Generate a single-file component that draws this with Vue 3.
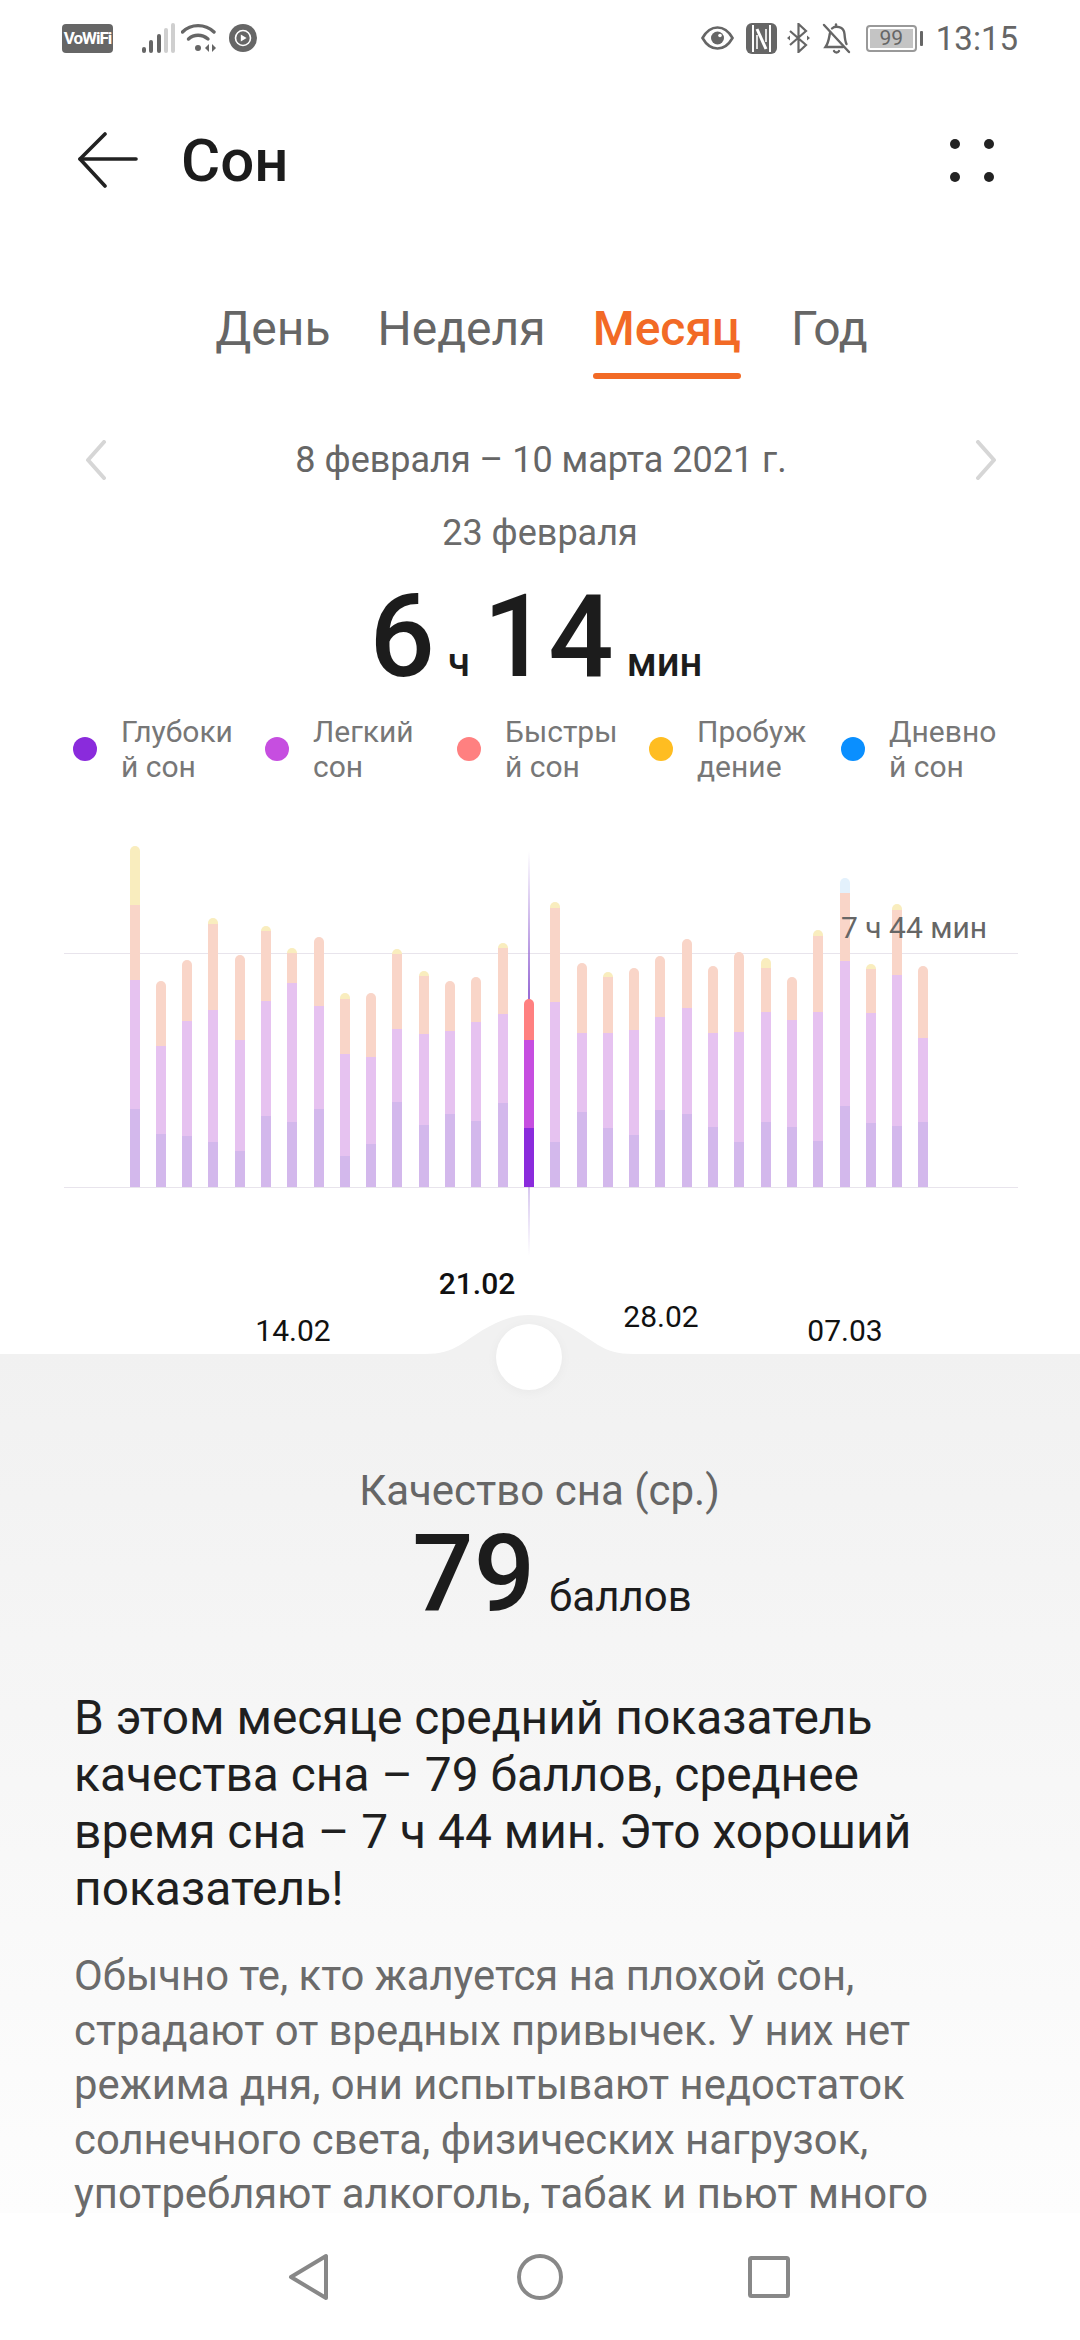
<template>
  <div class="screen">
    <div class="status">
      <div class="status-left">
        <span class="vowifi">VoWiFi</span>
        <svg class="signal" width="36" height="32" viewBox="0 0 36 32">
          <rect x="1" y="25" width="4" height="6" rx="2" fill="#666" />
          <rect x="8" y="18" width="4" height="13" rx="2" fill="#666" />
          <rect x="16" y="12" width="4" height="19" rx="2" fill="#666" />
          <rect x="23" y="6" width="4" height="25" rx="2" fill="#cfcfcf" />
          <rect x="30" y="1" width="4" height="30" rx="2" fill="#cfcfcf" />
        </svg>
        <svg class="wifi" width="36" height="30" viewBox="0 0 36 30" fill="none" stroke="#666" stroke-width="3.4" stroke-linecap="round">
          <path d="M1.5 9 C 10 0.5 24 0.5 33 9" />
          <path d="M7.5 16 C 13 11 21 11 27 16" />
          <circle cx="17" cy="25" r="3" fill="#666" stroke="none" />
          <path d="M24 25 l4 -4 v8 z M31 21 l4 4 l-4 4 z" fill="#666" stroke="none" />
        </svg>
        <svg class="play" width="28" height="28" viewBox="0 0 28 28">
          <circle cx="14" cy="14" r="14" fill="#666" />
          <circle cx="14" cy="14" r="7.5" fill="none" stroke="#fff" stroke-width="1.6" />
          <path d="M11.8 10.5 L17.6 14 L11.8 17.5 Z" fill="#fff" />
        </svg>
      </div>
      <div class="status-right">
        <svg width="33" height="24" viewBox="0 0 33 24">
          <path d="M1.5 12 C 6 4 11 1.5 16.5 1.5 C 22 1.5 27 4 31.5 12 C 27 20 22 22.5 16.5 22.5 C 11 22.5 6 20 1.5 12 Z" fill="none" stroke="#666" stroke-width="2.6" />
          <circle cx="16.5" cy="12" r="6.5" fill="#666" />
          <circle cx="19" cy="9.5" r="1.8" fill="#fff" />
        </svg>
        <svg class="nfc" width="31" height="31" viewBox="0 0 31 31">
          <rect width="31" height="31" rx="6" fill="#666" />
          <path d="M7 2 V29 M24 2 V29" stroke="#fff" stroke-width="2" />
          <path d="M11 6 L20 26" stroke="#fff" stroke-width="3" />
          <path d="M11 12 V26 M20 6 V19" stroke="#fff" stroke-width="1.6" />
        </svg>
        <svg class="bt" width="25" height="30" viewBox="0 0 25 30" fill="none" stroke="#666" stroke-width="2.2">
          <path d="M4 8 L20 22 L12.5 29 V1 L20 8 L4 22" />
          <path d="M1 15 l3 -2.5 v5 z M24 15 l-3 -2.5 v5 z" fill="#666" stroke="none" />
        </svg>
        <svg class="bell" width="29" height="31" viewBox="0 0 29 31" fill="none" stroke="#666" stroke-width="2.4" stroke-linecap="round">
          <path d="M8 10 C 7 14 7 19 3.5 24 H 21" />
          <path d="M10 5.5 C 13 2.5 22 3 22.5 11 C 22.8 15 23 18 24.5 21" />
          <path d="M14 3 V1.5" />
          <path d="M12 28 C 13 30 16 30 17 28" />
          <path d="M2 2 L27 29" />
        </svg>
        <div class="battery"><span class="battery-fill">99</span></div>
        <span class="battery-nub"></span>
        <span class="clock">13:15</span>
      </div>
    </div>

    <div class="appbar">
      <svg class="back" width="60" height="56" viewBox="0 0 60 56" fill="none" stroke="#222" stroke-width="3.6" stroke-linecap="round" stroke-linejoin="round">
        <path d="M27 2 L2 27 L27 54" />
        <path d="M2 27 H58" />
      </svg>
      <span class="title">Сон</span>
      <div class="menu">
        <i></i><i></i><i></i><i></i>
      </div>
    </div>

    <div class="tabs">
      <span v-for="t in tabs" :key="t" class="tab" :class="{ active: t === 'Месяц' }">{{ t }}</span>
    </div>

    <div class="range">
      <svg width="24" height="40" viewBox="0 0 24 40" fill="none" stroke="#d6d6d6" stroke-width="4" stroke-linecap="round" stroke-linejoin="round">
        <path d="M20 2 L4 20 L20 38" />
      </svg>
      <span>8 февраля – 10 марта 2021 г.</span>
      <svg width="24" height="40" viewBox="0 0 24 40" fill="none" stroke="#d6d6d6" stroke-width="4" stroke-linecap="round" stroke-linejoin="round">
        <path d="M4 2 L20 20 L4 38" />
      </svg>
    </div>

    <div class="day">23 февраля</div>
    <div class="total">
      <b>6</b><small>ч</small><b>14</b><small>мин</small>
    </div>

    <div class="legend">
      <div v-for="l in legend" :key="l.color" class="legend-item">
        <span class="dot" :style="{ background: l.color }"></span>
        <span class="legend-text">{{ l.a }}<br />{{ l.b }}</span>
      </div>
    </div>

    <div class="chart">
      <div class="grid-line avg"></div>
      <div class="grid-line base"></div>
      <div class="marker"></div>
      <div class="bars">
        <div v-for="(b, i) in bars" :key="i" class="bar">
          <span v-for="(s, j) in b.parts" :key="j" :style="{ height: s.h + 'px', background: s.c }"></span>
        </div>
      </div>
      <div class="avg-label">7 ч 44 мин</div>
    </div>

    <div class="dates">
      <span v-for="d in dates" :key="d.t" class="date" :class="{ now: d.now }" :style="{ marginTop: d.top + 'px' }">{{ d.t }}</span>
    </div>

    <div class="panel">
      <svg class="hump" width="208" height="40" viewBox="0 0 208 40">
        <path d="M0 40 V39 C 15 39 25 36 35 30 C 52 19 75 0 104 0 C 133 0 156 19 173 30 C 183 36 193 39 208 39 V40 Z" fill="#f1f1f1" />
      </svg>
      <div class="knob"></div>
      <div class="score-label">Качество сна (ср.)</div>
      <div class="score"><b>79</b><span>баллов</span></div>
      <p class="lead">В этом месяце средний показатель качества сна – 79 баллов, среднее время сна – 7 ч 44 мин. Это хороший показатель!</p>
      <p class="body">Обычно те, кто жалуется на плохой сон, страдают от вредных привычек. У них нет режима дня, они испытывают недостаток солнечного света, физических нагрузок, употребляют алкоголь, табак и пьют много</p>
    </div>

    <div class="navbar">
      <svg width="42" height="48" viewBox="0 0 42 48" fill="none" stroke="#888" stroke-width="4" stroke-linejoin="round">
        <path d="M38 3 V45 L3 24 Z" />
      </svg>
      <svg width="46" height="46" viewBox="0 0 46 46" fill="none" stroke="#888" stroke-width="4">
        <circle cx="23" cy="23" r="21" />
      </svg>
      <svg width="42" height="42" viewBox="0 0 42 42" fill="none" stroke="#888" stroke-width="4" stroke-linejoin="round">
        <rect x="2" y="2" width="38" height="38" rx="1.5" />
      </svg>
    </div>
  </div>
</template>

<script setup>
const tabs = ['День', 'Неделя', 'Месяц', 'Год']

const legend = [
  { color: '#8a2bdc', a: 'Глубоки', b: 'й сон' },
  { color: '#c64ee0', a: 'Легкий', b: 'сон' },
  { color: '#ff8080', a: 'Быстры', b: 'й сон' },
  { color: '#ffbd21', a: 'Пробуж', b: 'дение' },
  { color: '#0a8fff', a: 'Дневно', b: 'й сон' }
]

// y of each segment edge, measured at 3x: [stack top, peach top, light top, deep top]
const BASE = 1098
const rows = [
  [76, 252, 477, 864], [480, 480, 675, 940], [418, 418, 600, 945], [292, 308, 567, 963],
  [402, 402, 657, 990], [315, 330, 540, 884], [382, 397, 486, 903], [348, 348, 555, 864],
  [515, 535, 699, 1005], [517, 517, 708, 968], [384, 400, 624, 844], [450, 466, 639, 912],
  [480, 480, 630, 879], [468, 468, 603, 900], [367, 382, 579, 846], [534, 534, 657, 921],
  [243, 260, 543, 963], [426, 426, 636, 873], [453, 468, 636, 921], [441, 441, 627, 942],
  [405, 405, 588, 868], [354, 354, 561, 880], [435, 435, 636, 918], [393, 393, 633, 963],
  [411, 441, 573, 903], [468, 468, 597, 918], [327, 345, 573, 960], [171, 216, 420, 855],
  [429, 444, 576, 906], [250, 267, 462, 915], [435, 435, 651, 903]
]

const DIM = ['#f9edbe', '#f9d5c8', '#e6c2f0', '#d3b8ec']
const LIT = ['#ff8080', '#ff8080', '#c64ee0', '#8a2bdc']

const bars = rows.map((r, i) => {
  const colors = i === 15 ? LIT : i === 27 ? ['#e3f1fc', ...DIM.slice(1)] : DIM
  const edges = [...r, BASE]
  const parts = []
  for (let k = 0; k < 4; k++) {
    const h = (edges[k + 1] - edges[k]) / 3
    if (h > 0) parts.push({ h, c: colors[k] })
  }
  return { parts }
})

const dates = [
  { t: '14.02', top: 47 },
  { t: '21.02', top: 0, now: true },
  { t: '28.02', top: 33 },
  { t: '07.03', top: 47 }
]
</script>

<style scoped>
.screen {
  width: 1080px;
  height: 2340px;
  overflow: hidden;
  background: #fff;
  font-family: Roboto, "Noto Sans", sans-serif;
  color: #666;
}

.status {
  height: 76px;
  display: flex;
  align-items: center;
  justify-content: space-between;
  padding: 0 62px;
}
.status-left,
.status-right {
  display: flex;
  align-items: center;
}
.vowifi {
  width: 51px;
  height: 29px;
  border-radius: 4px;
  background: #666;
  color: #fff;
  font-size: 17px;
  font-weight: 700;
  line-height: 29px;
  text-align: center;
  letter-spacing: -1px;
  white-space: nowrap;
}
.signal {
  margin-left: 28px;
}
.wifi {
  margin-left: 4px;
}
.play {
  margin-left: 12px;
}
.nfc {
  margin-left: 12px;
}
.bt {
  margin-left: 9px;
}
.bell {
  margin-left: 11px;
}
.battery {
  margin-left: 15px;
  width: 51px;
  height: 27px;
  box-sizing: border-box;
  border: 2px solid #999;
  border-radius: 4px;
  padding: 2px;
}
.battery-fill {
  display: block;
  height: 100%;
  background: #c4c4c4;
  font-size: 21px;
  line-height: 19px;
  text-align: center;
  color: #666;
}
.battery-nub {
  width: 3px;
  height: 15px;
  margin-left: 3px;
  background: #666;
  border-radius: 1px;
}
.clock {
  margin-left: 13px;
  font-size: 33px;
  color: #666;
}

.appbar {
  margin-top: 31px;
  height: 106px;
  display: flex;
  align-items: center;
  padding: 0 0 0 78px;
}
.back {
  flex: none;
}
.title {
  margin-left: 43px;
  font-size: 60px;
  font-weight: 500;
  color: #1c1c1c;
}
.menu {
  margin-left: auto;
  margin-right: 86px;
  width: 44px;
  display: grid;
  grid-template-columns: 10px 10px;
  justify-content: space-between;
  row-gap: 23px;
}
.menu i {
  width: 10px;
  height: 10px;
  border-radius: 50%;
  background: #222;
}

.tabs {
  margin-top: 81px;
  height: 96px;
  padding-left: 3px;
  display: flex;
  justify-content: center;
  gap: 47px;
}
.tab {
  position: relative;
  font-size: 48px;
  line-height: 70px;
  height: 70px;
  color: #666;
}
.tab:last-child {
  margin-left: 3px;
}
.tab.active {
  font-weight: 500;
  color: #f26a26;
}
.tab.active::after {
  content: "";
  position: absolute;
  left: 0;
  right: 0;
  top: 79px;
  height: 6px;
  border-radius: 3px;
  background: #f26a26;
}

.range {
  margin-top: 42px;
  height: 56px;
  padding: 0 82px 0 84px;
  display: flex;
  align-items: center;
  justify-content: space-between;
  font-size: 36px;
  color: #666;
}
.day {
  margin-top: 25px;
  line-height: 40px;
  font-size: 36px;
  text-align: center;
  color: #6b6b6b;
}
.total {
  margin-top: 29px;
  height: 110px;
  padding-right: 8px;
  display: flex;
  align-items: baseline;
  justify-content: center;
  color: #1c1c1c;
}
.total b {
  font-size: 115px;
  line-height: 110px;
  font-weight: 500;
}
.total small {
  margin: 0 13px;
  font-size: 40px;
  font-weight: 500;
}
.total small:last-child {
  margin-right: 0;
}

.legend {
  margin-top: 22px;
  padding-left: 73px;
  display: flex;
}
.legend-item {
  width: 192px;
  display: flex;
  align-items: center;
}
.dot {
  flex: none;
  width: 24px;
  height: 24px;
  border-radius: 50%;
}
.legend-text {
  margin-left: 24px;
  font-size: 30px;
  line-height: 35px;
  color: #777;
  white-space: nowrap;
}

.chart {
  position: relative;
  margin-top: 47px;
  height: 436px;
}
.grid-line {
  position: absolute;
  left: 64px;
  width: 954px;
  height: 1px;
  background: #e8e4ec;
}
.grid-line.avg {
  top: 122px;
}
.grid-line.base {
  top: 356px;
}
.bars {
  position: absolute;
  left: 129.5px;
  bottom: 80px;
  display: flex;
  align-items: flex-end;
  gap: 16.3px;
}
.bar {
  width: 10px;
  display: flex;
  flex-direction: column;
  border-radius: 5px 5px 0 0;
  overflow: hidden;
}
.bar span {
  display: block;
}
.marker {
  position: absolute;
  left: 528px;
  top: 20px;
  width: 2px;
  height: 405px;
  background: linear-gradient(to bottom, rgba(138, 94, 208, 0), #9a6fd6 35%, #9a6fd6 60%, rgba(138, 94, 208, 0.3) 85%, rgba(138, 94, 208, 0));
}
.avg-label {
  position: absolute;
  left: 841px;
  top: 78px;
  font-size: 30px;
  line-height: 38px;
  color: #666;
}

.dates {
  height: 87px;
  padding-left: 201px;
  display: flex;
}
.date {
  width: 184px;
  height: 34px;
  font-size: 30px;
  line-height: 34px;
  text-align: center;
  color: #111;
}
.date.now {
  font-weight: 500;
}

.panel {
  position: relative;
  height: 859px;
  padding: 0 75px 0 74px;
  box-sizing: border-box;
  background: linear-gradient(to bottom, #f1f1f1, #fdfdfd);
}
.hump {
  position: absolute;
  left: 425px;
  top: -39px;
}
.knob {
  position: absolute;
  left: 496px;
  top: -30px;
  width: 66px;
  height: 66px;
  border-radius: 50%;
  background: #fff;
  box-shadow: 0 2px 12px rgba(0, 0, 0, 0.04);
}
.score-label {
  padding-top: 114px;
  font-size: 42px;
  line-height: 46px;
  text-align: center;
  color: #666;
}
.score {
  margin-top: 10px;
  height: 100px;
  padding-left: 25px;
  display: flex;
  align-items: baseline;
  justify-content: center;
  color: #1c1c1c;
}
.score b {
  font-size: 108px;
  line-height: 100px;
  font-weight: 500;
}
.score span {
  margin-left: 14px;
  font-size: 42px;
}
.lead {
  margin: 66px 0 0;
  font-size: 47.9px;
  line-height: 57px;
  color: #1f1f1f;
}
.body {
  margin: 31px 0 0;
  font-size: 41.8px;
  line-height: 54.6px;
  color: #6b6b6b;
}

.navbar {
  height: 128px;
  display: flex;
  align-items: center;
  background: #fff;
  padding-left: 288px;
}
.navbar svg:nth-child(2) {
  margin-left: 187px;
}
.navbar svg:nth-child(3) {
  margin-left: 185px;
}
</style>

<style>
html,
body {
  margin: 0;
  background: #fff;
}
</style>
